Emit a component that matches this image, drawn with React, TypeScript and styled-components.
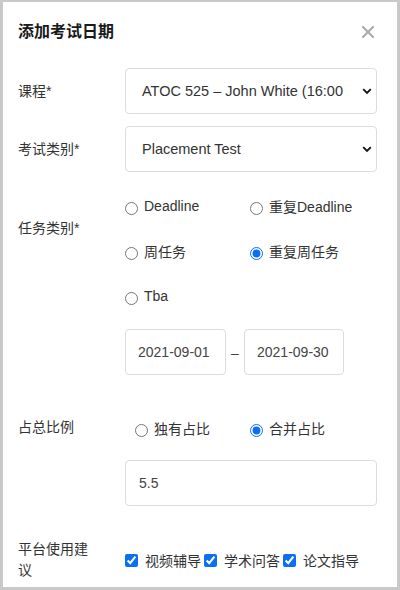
import React from "react";
import styled, { createGlobalStyle } from "styled-components";

const Global = createGlobalStyle`
  html, body { margin: 0; padding: 0; }
  body {
    width: 400px;
    height: 590px;
    background: #c9c9c9;
    font-family: "Liberation Sans", "Noto Sans CJK SC", sans-serif;
    overflow: hidden;
  }
  #root { padding: 2px 3px 3px 3px; box-sizing: border-box; height: 590px; }
`;

const Modal = styled.div`
  background: #fff;
  height: 585px;
  overflow: hidden;
  box-sizing: border-box;
  padding: 0 20px 0 15px;
  color: #333;
`;

const Header = styled.div`
  display: flex;
  align-items: center;
  justify-content: space-between;
  height: 22px;
  padding-top: 19px;
  margin-bottom: 25px;
`;

const Title = styled.h2`
  margin: 0;
  font-size: 16px;
  line-height: 22px;
  font-weight: 700;
  color: #1a1a1a;
`;

const Close = styled.button`
  border: 0;
  background: none;
  padding: 0;
  width: 14px;
  height: 14px;
  display: flex;
  align-items: center;
  justify-content: center;
  margin-right: 2px;
  cursor: pointer;
`;

const Row = styled.div<{ $align?: string; $mt?: number }>`
  display: flex;
  align-items: ${(p) => p.$align || "center"};
  margin-top: ${(p) => p.$mt ?? 0}px;
`;

const Label = styled.div<{ $mt?: number }>`
  width: 80px;
  flex: none;
  margin-right: 27px;
  font-size: 14px;
  line-height: 21px;
  margin-top: ${(p) => p.$mt ?? 0}px;
`;

const Control = styled.div`
  flex: 1;
  min-width: 0;
`;

const SelectWrap = styled.div`
  position: relative;
`;

const Select = styled.select`
  appearance: none;
  -webkit-appearance: none;
  width: 100%;
  height: 46px;
  box-sizing: border-box;
  border: 1px solid #dcdcdc;
  border-radius: 4px;
  background: #fff;
  padding: 0 30px 0 16px;
  font-family: inherit;
  font-size: 14.5px;
  color: #333;
  outline: none;
`;

const Chevron = styled.svg`
  position: absolute;
  right: 5px;
  top: 20px;
  pointer-events: none;
`;

const RadioGrid = styled.div<{ $indent?: number; $rowGap?: number }>`
  display: grid;
  grid-template-columns: 125px 125px;
  row-gap: ${(p) => p.$rowGap ?? 25}px;
  & > label:nth-child(odd) { padding-left: ${(p) => p.$indent ?? 0}px; }
`;

const Choice = styled.label`
  display: flex;
  align-items: center;
  height: 20px;
  font-size: 14px;
  color: #333;
  white-space: nowrap;
`;

const Radio = styled.input.attrs({ type: "radio" })`
  width: 13px;
  height: 13px;
  margin: 5px 6px 0 0;
  accent-color: #0a6ff5;
  flex: none;
`;

const DateRow = styled.div`
  display: flex;
  align-items: center;
  margin-left: 107px;
  margin-top: 23px;
`;

const Field = styled.input<{ $w?: number }>`
  height: 46px;
  width: ${(p) => (p.$w ? `${p.$w}px` : "100%")};
  box-sizing: border-box;
  border: 1px solid #dcdcdc;
  border-radius: 4px;
  padding: 0 0 0 ${(p) => (p.$w ? 12 : 13)}px;
  font-family: inherit;
  font-size: 14px;
  color: #444;
  outline: none;
`;

const Dash = styled.span`
  width: 18px;
  text-align: center;
  font-size: 14px;
  color: #444;
  padding-top: 1px;
`;

const Checks = styled.div`
  display: flex;
  align-items: center;
`;

const CheckItem = styled.label`
  display: flex;
  align-items: center;
  font-size: 14px;
  color: #333;
  margin-right: 3px;
  white-space: nowrap;
`;

const Check = styled.input.attrs({ type: "checkbox" })`
  width: 13px;
  height: 13px;
  margin: 0 7px 0 0;
  accent-color: #0a6ff5;
`;

export default function App() {
  return (
    <>
      <Global />
      <Modal>
        <Header>
          <Title>添加考试日期</Title>
          <Close aria-label="close">
            <svg width="12" height="12" viewBox="0 0 12 12">
              <path d="M1 1L11 11M11 1L1 11" stroke="#a9a9a9" strokeWidth="2" strokeLinecap="square" />
            </svg>
          </Close>
        </Header>

        <Row>
          <Label>课程*</Label>
          <Control>
            <SelectWrap>
              <Select defaultValue="a">
                <option value="a">ATOC 525 – John White (16:00</option>
              </Select>
              <Chevron width="10" height="7" viewBox="0 0 10 7">
                <path d="M1.2 1.2L5 5L8.8 1.2" fill="none" stroke="#111" strokeWidth="1.8" />
              </Chevron>
            </SelectWrap>
          </Control>
        </Row>

        <Row $mt={12}>
          <Label>考试类别*</Label>
          <Control>
            <SelectWrap>
              <Select defaultValue="p">
                <option value="p">Placement Test</option>
              </Select>
              <Chevron width="10" height="7" viewBox="0 0 10 7">
                <path d="M1.2 1.2L5 5L8.8 1.2" fill="none" stroke="#111" strokeWidth="1.8" />
              </Chevron>
            </SelectWrap>
          </Control>
        </Row>

        <Row $align="flex-start" $mt={24}>
          <Label $mt={22}>任务类别*</Label>
          <Control>
            <RadioGrid>
              <Choice><Radio name="task" />Deadline</Choice>
              <Choice><Radio name="task" />重复Deadline</Choice>
              <Choice><Radio name="task" />周任务</Choice>
              <Choice><Radio name="task" defaultChecked />重复周任务</Choice>
              <Choice><Radio name="task" />Tba</Choice>
            </RadioGrid>
          </Control>
        </Row>

        <DateRow>
          <Field $w={101} defaultValue="2021-09-01" />
          <Dash>–</Dash>
          <Field $w={100} defaultValue="2021-09-30" />
        </DateRow>

        <Row $mt={42}>
          <Label>占总比例</Label>
          <Control>
            <RadioGrid $indent={10}>
              <Choice><Radio name="ratio" />独有占比</Choice>
              <Choice><Radio name="ratio" defaultChecked />合并占比</Choice>
            </RadioGrid>
          </Control>
        </Row>

        <Row $mt={22}>
          <Label />
          <Control>
            <Field defaultValue="5.5" />
          </Control>
        </Row>

        <Row $mt={33}>
          <Label>平台使用建议</Label>
          <Control>
            <Checks>
              <CheckItem><Check defaultChecked />视频辅导</CheckItem>
              <CheckItem><Check defaultChecked />学术问答</CheckItem>
              <CheckItem><Check defaultChecked />论文指导</CheckItem>
            </Checks>
          </Control>
        </Row>
      </Modal>
    </>
  );
}
